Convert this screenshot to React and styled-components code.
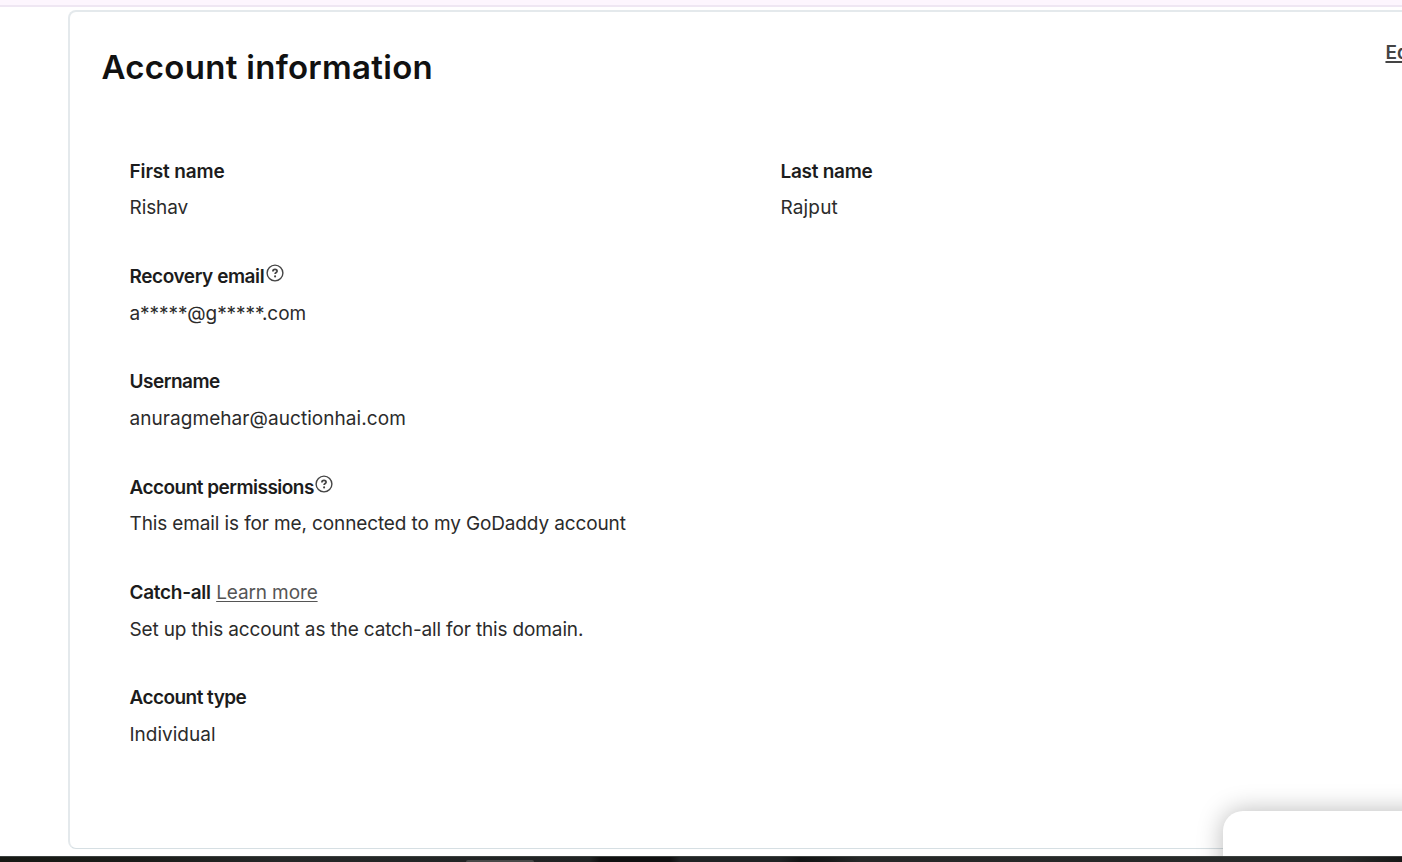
import React from "react";
import styled, { createGlobalStyle } from "styled-components";

const GlobalStyle = createGlobalStyle`
  *, *::before, *::after { box-sizing: border-box; }
  body { margin: 0; background: #fff; }
`;

const Page = styled.div`
  position: relative;
  display: flex;
  flex-direction: column;
  width: 100%;
  height: 862px;
  overflow: hidden;
  font-family: Inter, "Liberation Sans", sans-serif;
  font-size: 19px;
  color: #2b2b2b;
`;

const TopBar = styled.div`
  flex: none;
  height: 7px;
  background: #fdf6fe;
  border-bottom: 2px solid #efe7f3;
`;

const Main = styled.main`
  flex: 1;
  min-height: 0;
  padding: 3px 0 7px 68px;
`;

const Card = styled.section`
  width: 1400px;
  height: 100%;
  border: 2px solid #e4e9ec;
  border-bottom: 1px solid #d6dfe3;
  border-radius: 8px;
  padding: 24px 0 0 31.5px;
`;

const CardHeader = styled.header`
  display: flex;
  justify-content: space-between;
  align-items: flex-start;
  width: 1321px;
  height: 120.7px;
`;

const Title = styled.h1`
  margin: 0;
  padding-top: 9px;
  font-size: 33px;
  line-height: 44px;
  font-weight: 600;
  letter-spacing: 0.29px;
  color: #111;
`;

const Link = styled.a`
  color: #555;
  font-weight: ${(p) => (p.$strong ? 600 : 400)};
  letter-spacing: ${(p) => p.$spacing || 0}px;
  line-height: 30px;
  text-decoration: underline;
  text-decoration-thickness: 1px;
  text-underline-offset: 2px;
  text-decoration-skip-ink: none;
`;

const EditLink = styled(Link)`
  padding-top: 2px;
  margin-right: 2px;
  color: #444;
  text-decoration-thickness: 2px;
`;

const Fields = styled.div`
  display: grid;
  grid-template-columns: 651px 1fr;
  grid-auto-rows: 105.35px;
  padding-left: 28px;
`;

const Field = styled.div`
  grid-column: ${(p) => p.$column || 1};
  display: flex;
  flex-direction: column;
  gap: 6.5px;
  line-height: 30px;
  white-space: nowrap;
`;

const Label = styled.div`
  display: flex;
  height: 30px;
  font-weight: 600;
  color: #1c1c1c;
`;

const LabelText = styled.span`
  letter-spacing: ${(p) => p.$spacing}px;
  margin-right: ${(p) => p.$gap || 0}px;
`;

const Value = styled.div`
  height: 30px;
  letter-spacing: ${(p) => p.$spacing}px;
`;

const HelpSvg = styled.svg`
  flex: none;
  width: 18px;
  height: 18px;
  margin: 2.3px 0 0 1.5px;
  color: #444;
`;

const Popup = styled.aside`
  position: absolute;
  left: 1223px;
  top: 811px;
  width: 300px;
  height: 120px;
  border-radius: 20px;
  background: #fff;
  box-shadow: 0 0 26px rgba(0, 0, 0, 0.28);
`;

const BottomStrip = styled.footer`
  position: relative;
  z-index: 1;
  flex: none;
  display: flex;
  height: 6px;
  background: linear-gradient(90deg, #171914 0, #1b1d1a 140px, #252828 280px, #202323 590px, #101010 600px, #101010 670px, #202324 680px, #202324 780px, #121414 800px, #191b1b 830px, #262828 860px, #272a29 1340px, #171817 1402px);
  border-top: 1px solid #3b403e;
`;

const StripTab = styled.div`
  align-self: flex-end;
  width: 68px;
  height: 2px;
  margin-left: 466px;
  border-radius: 8px 8px 0 0;
  background: #484a49;
`;

function HelpIcon() {
  return (
    <HelpSvg viewBox="0 0 18 18" fill="none" stroke="currentColor" aria-label="Help">
      <circle cx="9" cy="9" r="7.9" strokeWidth="1.4" />
      <path d="M6.9 7.4C6.9 6.1 7.8 5.4 9 5.4s2.1.7 2.1 1.8c0 1.3-2 1.3-2 2.8" strokeWidth="1.7" />
      <circle cx="9.1" cy="12.4" r="1.05" fill="currentColor" stroke="none" />
    </HelpSvg>
  );
}

const fields = [
  { label: "First name", ls: -0.13, value: "Rishav", vs: -0.1 },
  { label: "Last name", ls: -0.28, value: "Rajput", vs: 0.15, column: 2 },
  { label: "Recovery email", ls: -0.43, value: "a*****@g*****.com", vs: -0.05, help: true },
  { label: "Username", ls: -0.5, value: "anuragmehar@auctionhai.com", vs: 0.06 },
  { label: "Account permissions", ls: -0.53, value: "This email is for me, connected to my GoDaddy account", vs: -0.125, help: true },
  { label: "Catch-all", ls: -0.3, gap: 5.5, link: "Learn more", value: "Set up this account as the catch-all for this domain.", vs: -0.144 },
  { label: "Account type", ls: -0.55, value: "Individual", vs: 0 },
];

export default function App() {
  return (
    <Page>
      <GlobalStyle />
      <TopBar />
      <Main>
        <Card>
          <CardHeader>
            <Title>Account information</Title>
            <EditLink $strong>Edit</EditLink>
          </CardHeader>
          <Fields>
            {fields.map((f) => (
              <Field key={f.label} $column={f.column}>
                <Label>
                  <LabelText $spacing={f.ls} $gap={f.gap}>{f.label}</LabelText>
                  {f.help && <HelpIcon />}
                  {f.link && <Link $spacing={-0.12}>{f.link}</Link>}
                </Label>
                <Value $spacing={f.vs}>{f.value}</Value>
              </Field>
            ))}
          </Fields>
        </Card>
      </Main>
      <BottomStrip>
        <StripTab />
      </BottomStrip>
      <Popup />
    </Page>
  );
}
